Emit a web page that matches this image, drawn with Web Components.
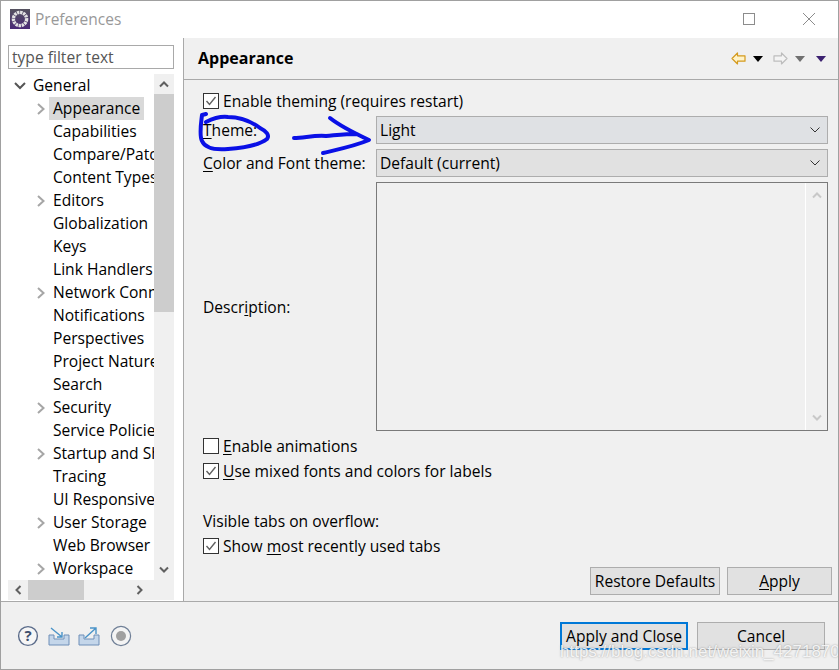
<!DOCTYPE html>
<html>
<head>
<meta charset="utf-8">
<title>Preferences</title>
<style>
  html, body { margin: 0; padding: 0; background: #f0f0f0; }
  body { font-family: "Open Sans", "Noto Sans", sans-serif; font-size: 15.6px; color: #000; }
  u { text-underline-offset: 2px; }
</style>
</head>
<body>
<pref-window>
  <title-bar slot="title">Preferences</title-bar>
  <pref-tree slot="tree"></pref-tree>
  <page-header slot="header">Appearance</page-header>

  <pref-form slot="page">
    <pref-check checked style="margin-top:10px"><span>Enable theming (requires restart)</span></pref-check>
    <pref-field style="margin-top:4px"><span slot="label"><u>T</u>heme:</span><pref-combo value="Light" tint="#dfe1e4"></pref-combo></pref-field>
    <pref-field style="margin-top:5px"><span slot="label"><u>C</u>olor and Font theme:</span><pref-combo value="Default (current)"></pref-combo></pref-field>
    <pref-field style="margin-top:5px"><span slot="label">Descr<u>i</u>ption:</span><desc-box></desc-box></pref-field>
    <pref-check style="margin-top:4px"><span><u>E</u>nable animations</span></pref-check>
    <pref-check checked style="margin-top:3px"><span><u>U</u>se mixed fonts and colors for labels</span></pref-check>
    <div style="margin-top:28px;height:22px;line-height:22px;white-space:nowrap">Visible tabs on overflow:</div>
    <pref-check checked style="margin-top:3px"><span>Show <u>m</u>ost recently used tabs</span></pref-check>
    <div style="display:flex;justify-content:flex-end;gap:7px;margin-top:10px;margin-right:-4px">
      <pref-button width="130">Restore Defaults</pref-button>
      <pref-button width="105"><u>A</u>pply</pref-button>
    </div>
  </pref-form>

  <footer-icons slot="icons"></footer-icons>
  <pref-button slot="actions" width="128" primary>Apply and Close</pref-button>
  <pref-button slot="actions" width="128">Cancel</pref-button>
</pref-window>

<script>
function shadow(el, html) {
  el.attachShadow({ mode: 'open' }).innerHTML = html;
}

class PrefWindow extends HTMLElement {
  connectedCallback() {
    shadow(this, `
      <style>
        :host { display: block; position: relative; width: 839px; height: 670px; box-sizing: border-box;
                border: 1px solid #a0a0a0; background: #f0f0f0; overflow: hidden; }
        .main { display: flex; height: 563px; border-bottom: 1px solid #a9a9a9; }
        .left { width: 183px; background: #fff; border-right: 1px solid #a9a9a9; flex: none; padding: 7px 0 0 7px; box-sizing: border-box; }
        .right { flex: 1; min-width: 0; display: flex; flex-direction: column; }
        .foot { display: flex; align-items: center; justify-content: space-between; height: 67px; padding: 0 13px 0 16px; box-sizing: border-box; }
        .actions { display: flex; gap: 9px; }
        .over { position: absolute; left: -1px; top: -1px; pointer-events: none; }
        .mark { position: absolute; left: 559px; top: 641px; font: 17px "Liberation Sans", sans-serif; color: rgba(255,255,255,.85);
                white-space: nowrap; text-shadow: 0 0 2px rgba(120,120,120,.75); }
      </style>
      <slot name="title"></slot>
      <div class="main">
        <div class="left"><slot name="tree"></slot></div>
        <div class="right"><slot name="header"></slot><slot name="page"></slot></div>
      </div>
      <div class="foot">
        <slot name="icons"></slot>
        <div class="actions"><slot name="actions"></slot></div>
      </div>
      <svg class="over" width="839" height="670" fill="none" stroke="#0a10e6" stroke-width="4" stroke-linecap="round" stroke-linejoin="round">
        <path d="M206 114 L202 115 C201 124 199 135 202 141 C205 148 216 150 228 149 C243 148 258 146 267 139 C270 135 266 131 260 128 C252 122 240 117 228 117 C220 116 212 119 206 122"/>
        <path d="M294 138 C304 138 314 135 326 136 C338 135 346 134 357 134 M330 118 C340 126 352 132 369 140 C355 146 340 149 323 153"/>
      </svg>
      <div class="mark" aria-hidden="true">https://blog.csdn.net/weixin_42718701</div>
    `);
  }
}

class TitleBar extends HTMLElement {
  connectedCallback() {
    shadow(this, `
      <style>
        :host { display: flex; align-items: center; height: 37px; background: #fff; padding: 0 22px 2px 9px; box-sizing: border-box; }
        .t { margin-left: 5px; color: #999; font-size: 15.5px; flex: 1; white-space: nowrap; }
        svg { display: block; flex: none; }
      </style>
      <svg width="20" height="20" viewBox="0 0 20 20">
        <defs><linearGradient id="g" x1="0" y1="0" x2="0" y2="1"><stop offset="0" stop-color="#55535f"/><stop offset="1" stop-color="#4a2a78"/></linearGradient></defs>
        <rect width="20" height="20" fill="url(#g)"/>
        <circle cx="10" cy="10" r="6.6" fill="none" stroke="#e4e4e4" stroke-width="3.4" stroke-dasharray="2.4 .7"/>
      </svg>
      <span class="t"><slot></slot></span>
      <svg width="14" height="14" viewBox="0 0 14 14" style="margin-right:46px"><rect x="1.5" y="1.5" width="11" height="11" fill="none" stroke="#8c8c8c"/></svg>
      <svg width="14" height="14" viewBox="0 0 14 14"><path d="M1 1 L13 13 M13 1 L1 13" stroke="#8c8c8c" stroke-width="1" fill="none"/></svg>
    `);
  }
}

const TREE = [
  ['Appearance', 1, 1], ['Capabilities', 0], ['Compare/Patch', 0], ['Content Types', 0], ['Editors', 1],
  ['Globalization', 0], ['Keys', 0], ['Link Handlers', 0], ['Network Connections', 1], ['Notifications', 0],
  ['Perspectives', 0], ['Project Natures', 0], ['Search', 0], ['Security', 1], ['Service Policies', 0],
  ['Startup and Shutdown', 1], ['Tracing', 0], ['UI Responsiveness', 0], ['User Storage', 1], ['Web Browser', 0], ['Workspace', 1]
];

class PrefTree extends HTMLElement {
  connectedCallback() {
    const rows = TREE.map(([name, arrow, sel]) => `
      <div class="row">
        <span class="tw">${arrow ? '<svg width="10" height="14" viewBox="0 0 10 14"><path d="M2 2 L7.5 7 L2 12" fill="none" stroke="#a6a6a6" stroke-width="2"/></svg>' : ''}</span>
        <span class="name ${sel ? 'sel' : ''}">${name}</span>
      </div>`).join('');
    shadow(this, `
      <style>
        :host { display: block; width: 166px; }
        .filter { height: 24px; box-sizing: border-box; border: 1px solid #a9a9a9; padding: 0 3px; line-height: 22px; color: #555; white-space: nowrap; overflow: hidden; }
        .view { display: grid; grid-template-columns: 146px 20px; grid-template-rows: 506px 20px; margin-top: 5px; }
        .items { overflow: hidden; }
        .row { display: flex; align-items: center; height: 23px; padding-left: 28px; white-space: nowrap; }
        .row.top { padding-left: 5px; }
        .tw { width: 17px; flex: none; display: flex; justify-content: flex-start; }
        .top .tw { width: 18px; }
        .name { padding: 0 3px 0 0; line-height: 23px; }
        .sel { background: #d9d9d9; padding: 0 4px 0 4px; margin-left: -4px; }
        .v { background: #f0f0f0; display: flex; flex-direction: column; }
        .h { background: #f0f0f0; grid-column: 1 / 3; display: flex; align-items: center; }
        .btn { width: 20px; height: 20px; flex: none; display: flex; align-items: center; justify-content: center; }
        .vthumb { height: 218px; background: #cdcdcd; }
        .vgap { flex: 1; background: #f0f0f0; }
        .hthumb { width: 56px; height: 20px; background: #cdcdcd; }
        .hgap { flex: 1; }
        svg { display: block; }
      </style>
      <div class="filter">type filter text</div>
      <div class="view">
        <div class="items">
          <div class="row top">
            <span class="tw"><svg width="14" height="10" viewBox="0 0 14 10"><path d="M2 2 L7 7 L12 2" fill="none" stroke="#555" stroke-width="2"/></svg></span>
            <span class="name" style="margin-left:2px">General</span>
          </div>
          ${rows}
        </div>
        <div class="v">
          <div class="btn"><svg width="12" height="8" viewBox="0 0 12 8"><path d="M2 6.5 L6 2.5 L10 6.5" fill="none" stroke="#606060" stroke-width="2"/></svg></div>
          <div class="vthumb"></div>
          <div class="vgap"></div>
          <div class="btn"><svg width="12" height="8" viewBox="0 0 12 8"><path d="M2 1.5 L6 5.5 L10 1.5" fill="none" stroke="#606060" stroke-width="2"/></svg></div>
        </div>
        <div class="h">
          <div class="btn"><svg width="8" height="12" viewBox="0 0 8 12"><path d="M6.5 2 L2.5 6 L6.5 10" fill="none" stroke="#606060" stroke-width="2"/></svg></div>
          <div class="hthumb"></div>
          <div class="hgap"></div>
          <div class="btn" style="margin-right:24px"><svg width="8" height="12" viewBox="0 0 8 12"><path d="M1.5 2 L5.5 6 L1.5 10" fill="none" stroke="#606060" stroke-width="2"/></svg></div>
        </div>
      </div>
    `);
  }
}

class PageHeader extends HTMLElement {
  connectedCallback() {
    shadow(this, `
      <style>
        :host { display: flex; align-items: center; height: 42px; flex: none; box-sizing: border-box; border-bottom: 1px solid #a9a9a9; padding: 0 11px 0 14px; }
        .t { flex: 1; font-weight: 700; font-size: 16px; margin-bottom: 1px; }
        svg { display: block; flex: none; }
      </style>
      <span class="t"><slot></slot></span>
      <svg width="15" height="13" viewBox="0 0 15 13" style="margin-right:7px"><path d="M1 6.5 L6.5 1 V3.8 H14 V9.2 H6.5 V12 Z" fill="#fff3c8" stroke="#d49a1e" stroke-width="1.2" stroke-linejoin="round"/></svg>
      <svg width="10" height="6" viewBox="0 0 10 6" style="margin-right:10px"><path d="M0 0 H10 L5 6 Z" fill="#000"/></svg>
      <svg width="15" height="13" viewBox="0 0 15 13" style="margin-right:7px"><path d="M14 6.5 L8.5 1 V3.8 H1 V9.2 H8.5 V12 Z" fill="#f4f4f4" stroke="#bdbdbd" stroke-width="1.2" stroke-linejoin="round"/></svg>
      <svg width="10" height="6" viewBox="0 0 10 6" style="margin-right:11px"><path d="M0 0 H10 L5 6 Z" fill="#707070"/></svg>
      <svg width="10" height="6" viewBox="0 0 10 6" style="margin-right:1px"><path d="M0 0 H10 L5 6 Z" fill="#3c2170"/></svg>
    `);
  }
}

class PrefForm extends HTMLElement {
  connectedCallback() {
    shadow(this, `
      <style>
        :host { display: flex; flex-direction: column; flex: 1; padding: 0 10px 0 19px; min-height: 0; }
      </style>
      <slot></slot>
    `);
  }
}

class PrefCheck extends HTMLElement {
  connectedCallback() {
    const on = this.hasAttribute('checked');
    shadow(this, `
      <style>
        :host { display: flex; align-items: center; height: 22px; white-space: nowrap; }
        .box { width: 16px; height: 16px; box-sizing: border-box; border: 1px solid #333; background: #fff; margin-right: 4px; flex: none; }
        svg { display: block; }
      </style>
      <span class="box">${on ? '<svg width="14" height="14" viewBox="0 0 14 14"><path d="M2.5 7 L5.5 10.5 L11.5 3" fill="none" stroke="#606060" stroke-width="1.4"/></svg>' : ''}</span>
      <slot></slot>
    `);
  }
}

class PrefField extends HTMLElement {
  connectedCallback() {
    shadow(this, `
      <style>
        :host { display: flex; align-items: center; white-space: nowrap; }
        .l { width: 173px; flex: none; }
        .c { flex: 1; min-width: 0; }
      </style>
      <div class="l"><slot name="label"></slot></div>
      <div class="c"><slot></slot></div>
    `);
  }
}

class PrefCombo extends HTMLElement {
  connectedCallback() {
    const tint = this.getAttribute('tint') || '#e1e1e1';
    shadow(this, `
      <style>
        :host { display: flex; align-items: center; height: 28px; box-sizing: border-box; border: 1px solid #adadad; background: ${tint}; padding: 0 7px 0 3px; }
        .v { flex: 1; white-space: nowrap; }
        svg { display: block; }
      </style>
      <span class="v">${this.getAttribute('value')}</span>
      <svg width="10" height="6" viewBox="0 0 10 6"><path d="M.5 .5 L5 5 L9.5 .5" fill="none" stroke="#333" stroke-width="1"/></svg>
    `);
  }
}

class DescBox extends HTMLElement {
  connectedCallback() {
    shadow(this, `
      <style>
        :host { display: flex; height: 249px; box-sizing: border-box; border: 1px solid #7a7a7a; background: #f0f0f0; }
        .a { flex: 1; }
        .s { width: 22px; border-left: 1px solid #fff; display: flex; flex-direction: column; justify-content: space-between; align-items: center; padding: 8px 0; box-sizing: border-box; }
        svg { display: block; }
      </style>
      <div class="a"></div>
      <div class="s">
        <svg width="12" height="8" viewBox="0 0 12 8"><path d="M2 6.5 L6 2.5 L10 6.5" fill="none" stroke="#c8c8c8" stroke-width="2"/></svg>
        <svg width="12" height="8" viewBox="0 0 12 8"><path d="M2 1.5 L6 5.5 L10 1.5" fill="none" stroke="#c8c8c8" stroke-width="2"/></svg>
      </div>
    `);
  }
}

class PrefButton extends HTMLElement {
  connectedCallback() {
    const primary = this.hasAttribute('primary');
    shadow(this, `
      <style>
        :host { display: flex; align-items: center; justify-content: center; height: 28px; box-sizing: border-box; white-space: nowrap;
                width: ${this.getAttribute('width')}px; background: #e1e1e1;
                border: ${primary ? '2px solid #0078d7' : '1px solid #adadad'}; }
      </style>
      <slot></slot>
    `);
  }
}

class FooterIcons extends HTMLElement {
  connectedCallback() {
    shadow(this, `
      <style>
        :host { display: flex; align-items: center; gap: 9px; }
        svg { display: block; flex: none; }
        text { font: 700 15px "Open Sans", sans-serif; fill: #3f4f6e; }
      </style>
      <svg width="22" height="22" viewBox="0 0 22 22"><circle cx="11" cy="11" r="9.4" fill="#f6f6f6" stroke="#5a6b8a" stroke-width="1.4"/><text x="11" y="16" text-anchor="middle">?</text></svg>
      <svg width="22" height="20" viewBox="0 0 22 20"><path d="M1 9 V19 H21 V9 H16 V13 H6 V9 Z" fill="#c4d6ea" stroke="#6f8fb8"/><path d="M3 2 L14 11 M14 6 V11 H9" fill="none" stroke="#4a93c8" stroke-width="1.4"/></svg>
      <svg width="22" height="20" viewBox="0 0 22 20" style="margin-left:-1px"><path d="M1 9 V19 H21 V9 H16 V13 H6 V9 Z" fill="#c4d6ea" stroke="#6f8fb8"/><path d="M7 12 L18 2 M12 2 H18 V8" fill="none" stroke="#4a93c8" stroke-width="1.4"/></svg>
      <svg width="22" height="22" viewBox="0 0 22 22" style="margin-left:1px"><circle cx="11" cy="11" r="9.6" fill="#f4f4f4" stroke="#6f7f96" stroke-width="1.2"/><circle cx="11" cy="11" r="5" fill="#a0a0a0"/></svg>
    `);
  }
}

customElements.define('pref-window', PrefWindow);
customElements.define('title-bar', TitleBar);
customElements.define('pref-tree', PrefTree);
customElements.define('page-header', PageHeader);
customElements.define('pref-form', PrefForm);
customElements.define('pref-check', PrefCheck);
customElements.define('pref-field', PrefField);
customElements.define('pref-combo', PrefCombo);
customElements.define('desc-box', DescBox);
customElements.define('pref-button', PrefButton);
customElements.define('footer-icons', FooterIcons);
</script>
</body>
</html>
